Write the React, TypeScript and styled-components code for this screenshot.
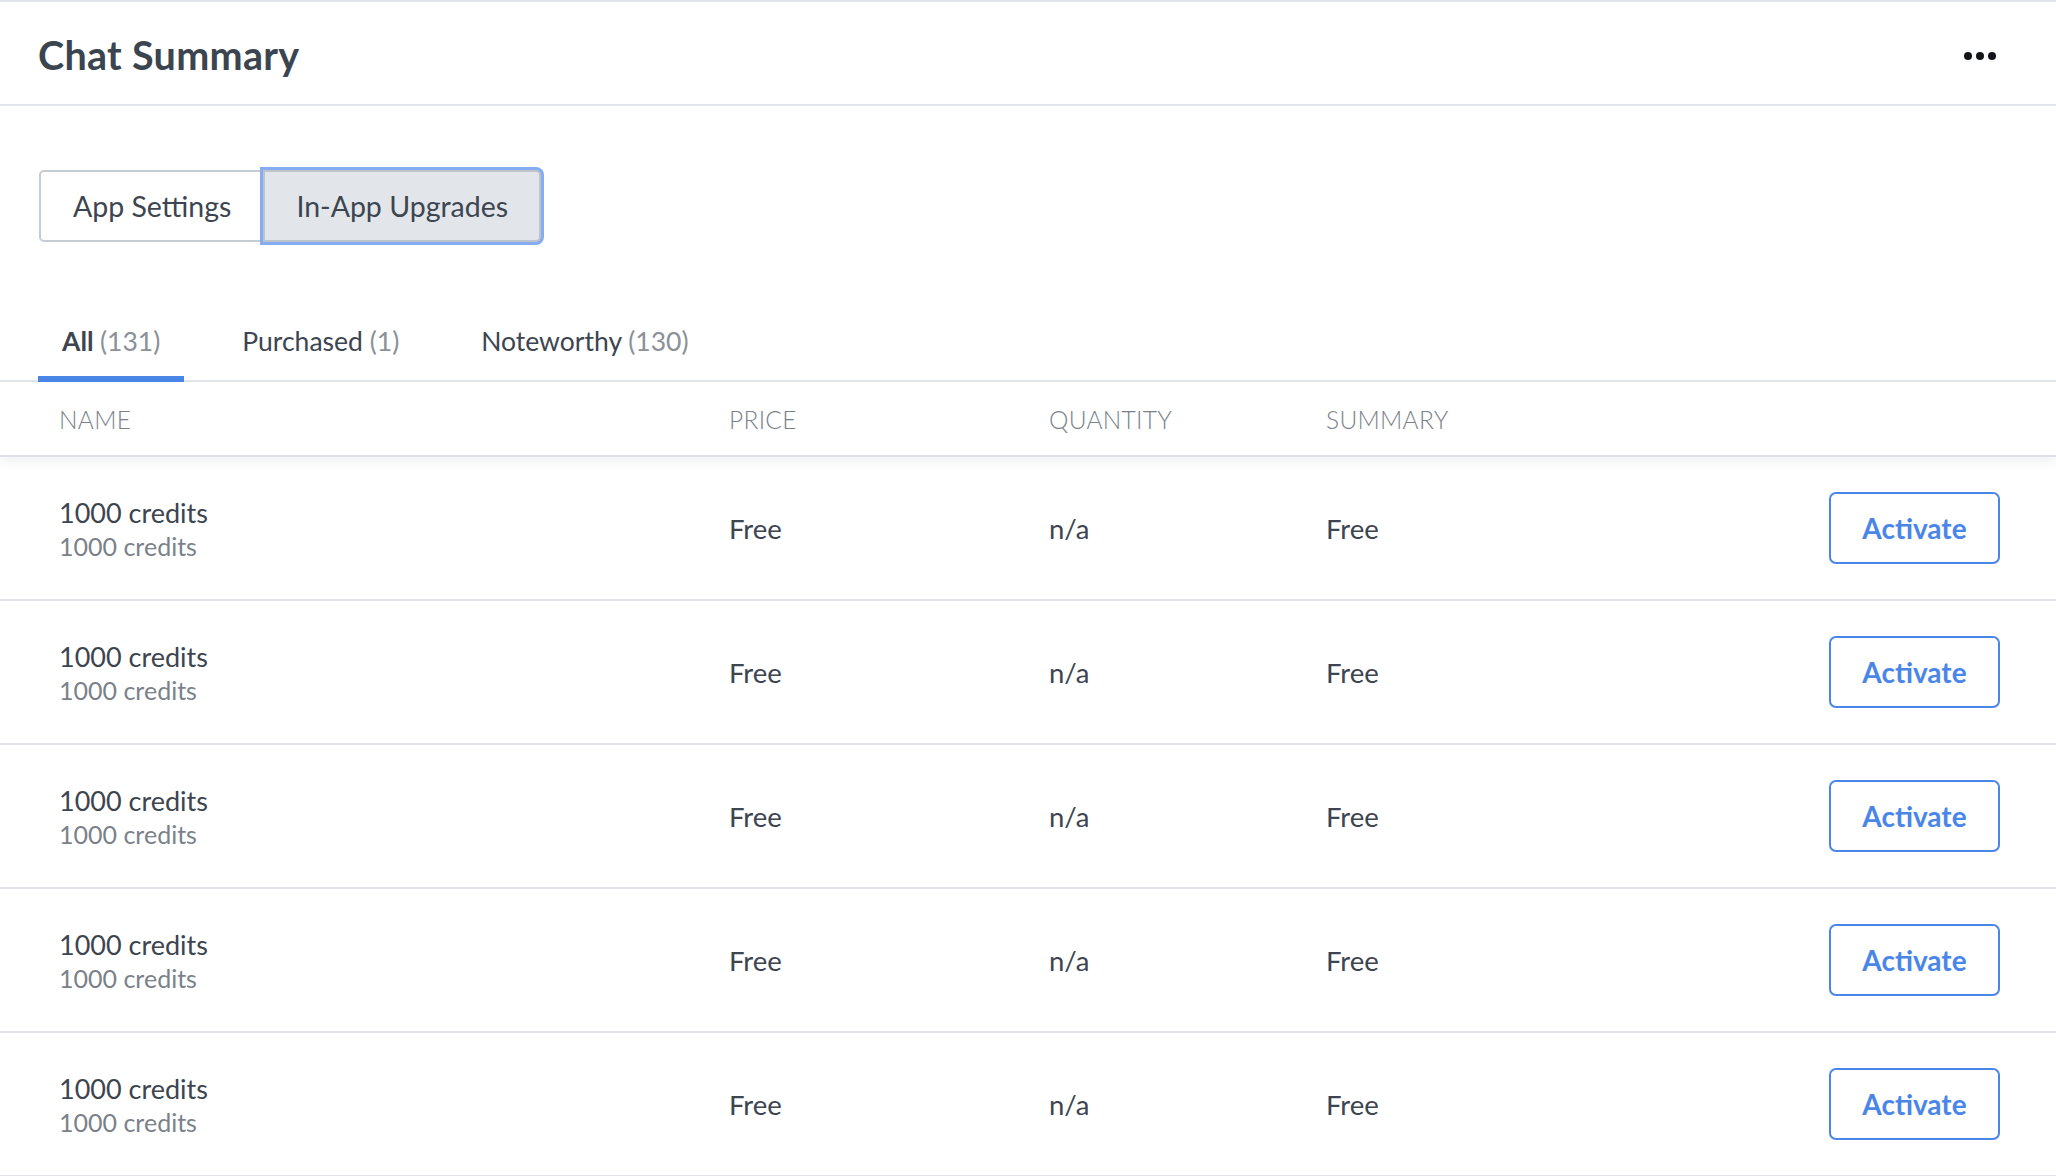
import React from "react";
import styled, { createGlobalStyle } from "styled-components";

const GlobalStyle = createGlobalStyle`
  html, body { margin: 0; padding: 0; background: #ffffff; }
  body { font-family: "Lato", "Open Sans", sans-serif; color: #3c4550; }
  * { box-sizing: border-box; }
`;

const Page = styled.div`
  width: 2056px;
  min-height: 1176px;
  border-top: 2px solid #e2e5e9;
  background: #fff;
  overflow: hidden;
`;

const Header = styled.header`
  height: 104px;
  display: flex;
  align-items: center;
  justify-content: space-between;
  padding: 2px 44px 0 38px;
  border-bottom: 2px solid #e3e6ea;
`;

const Title = styled.h1`
  margin: 0;
  font-size: 39.5px;
  font-weight: 700;
  color: #3b4550;
  letter-spacing: 0.3px;
`;

const MoreButton = styled.button`
  display: flex;
  gap: 4px;
  align-items: center;
  background: none;
  border: none;
  padding: 12px 16px 8px;
  cursor: pointer;
`;

const Dot = styled.span`
  width: 8px;
  height: 8px;
  border-radius: 50%;
  background: #111418;
`;

const Segments = styled.div`
  display: flex;
  margin: 64px 0 0 39px;
  width: max-content;
`;

const Segment = styled.button<{ $active?: boolean; $first?: boolean }>`
  height: 72px;
  padding: 0 ${(p) => (p.$active ? "31px" : "32px")};
  font-family: "Lato", sans-serif;
  font-size: 28.5px;
  font-weight: 400;
  color: #3c4550;
  background: ${(p) => (p.$active ? "#e2e6ea" : "#ffffff")};
  border: 2px solid ${(p) => (p.$active ? "#bcc3cb" : "#c6ccd3")};
  border-radius: ${(p) => (p.$first ? "5px 0 0 5px" : "0 5px 5px 0")};
  box-shadow: ${(p) => (p.$active ? "0 0 0 3px #86adf1" : "none")};
  position: relative;
  z-index: ${(p) => (p.$active ? 1 : 0)};
  margin-left: ${(p) => (p.$first ? "0" : "-2px")};
  cursor: pointer;
`;

const TabBar = styled.nav`
  display: flex;
  gap: 34px;
  margin-top: 61px;
  padding-left: 38px;
  border-bottom: 2px solid #e1e4e8;
`;

const Tab = styled.div<{ $active?: boolean }>`
  height: 79px;
  display: flex;
  align-items: center;
  padding: 3px 24px 0;
  font-size: 26.5px;
  font-weight: ${(p) => (p.$active ? 700 : 400)};
  color: #3c4550;
  border-bottom: 6px solid ${(p) => (p.$active ? "#4a86e8" : "transparent")};
  margin-bottom: -2px;
  white-space: pre;
`;

const Count = styled.span`
  font-weight: 400;
  color: #8a9198;
`;

const Grid = styled.div`
  display: grid;
  grid-template-columns: 670px 320px 277px 1fr auto;
  align-items: center;
  padding: 0 56px 0 59px;
`;

const HeadRow = styled(Grid)`
  height: 75px;
  padding-top: 2px;
  position: relative;
  z-index: 1;
  border-bottom: 2px solid #dde1e5;
  box-shadow: 0 6px 10px rgba(40, 50, 60, 0.06);
`;

const HeadCell = styled.div`
  font-size: 24.5px;
  font-weight: 300;
  color: #7a8289;
  letter-spacing: 0.3px;
`;

const Row = styled(Grid)`
  height: 144px;
  border-bottom: 2px solid #dfe2e6;
`;

const NameCell = styled.div`
  display: flex;
  flex-direction: column;
  gap: 2px;
  padding-top: 2px;
`;

const Primary = styled.div`
  font-size: 27px;
  color: #3c4550;
  line-height: 32px;
`;

const Secondary = styled.div`
  font-size: 25px;
  color: #7a8289;
  line-height: 31px;
`;

const Cell = styled.div`
  font-size: 27.5px;
  color: #3c4550;
`;

const ActivateButton = styled.button`
  width: 171px;
  height: 72px;
  border: 2px solid #4a86e8;
  border-radius: 7px;
  background: #fff;
  color: #4a86e8;
  font-family: "Lato", sans-serif;
  font-size: 28px;
  font-weight: 700;
  cursor: pointer;
`;

const tabs = [
  { label: "All", count: 131, active: true },
  { label: "Purchased", count: 1 },
  { label: "Noteworthy", count: 130 },
];

const rows = Array.from({ length: 5 }, () => ({
  name: "1000 credits",
  sub: "1000 credits",
  price: "Free",
  quantity: "n/a",
  summary: "Free",
}));

export default function App() {
  return (
    <>
      <GlobalStyle />
      <Page>
        <Header>
          <Title>Chat Summary</Title>
          <MoreButton aria-label="More">
            <Dot />
            <Dot />
            <Dot />
          </MoreButton>
        </Header>
        <Segments>
          <Segment $first>App Settings</Segment>
          <Segment $active>In-App Upgrades</Segment>
        </Segments>
        <TabBar>
          {tabs.map((t) => (
            <Tab key={t.label} $active={t.active}>
              {t.label} <Count>({t.count})</Count>
            </Tab>
          ))}
        </TabBar>
        <HeadRow>
          <HeadCell>NAME</HeadCell>
          <HeadCell>PRICE</HeadCell>
          <HeadCell>QUANTITY</HeadCell>
          <HeadCell>SUMMARY</HeadCell>
          <span />
        </HeadRow>
        {rows.map((r, i) => (
          <Row key={i}>
            <NameCell>
              <Primary>{r.name}</Primary>
              <Secondary>{r.sub}</Secondary>
            </NameCell>
            <Cell>{r.price}</Cell>
            <Cell>{r.quantity}</Cell>
            <Cell>{r.summary}</Cell>
            <ActivateButton>Activate</ActivateButton>
          </Row>
        ))}
      </Page>
    </>
  );
}
